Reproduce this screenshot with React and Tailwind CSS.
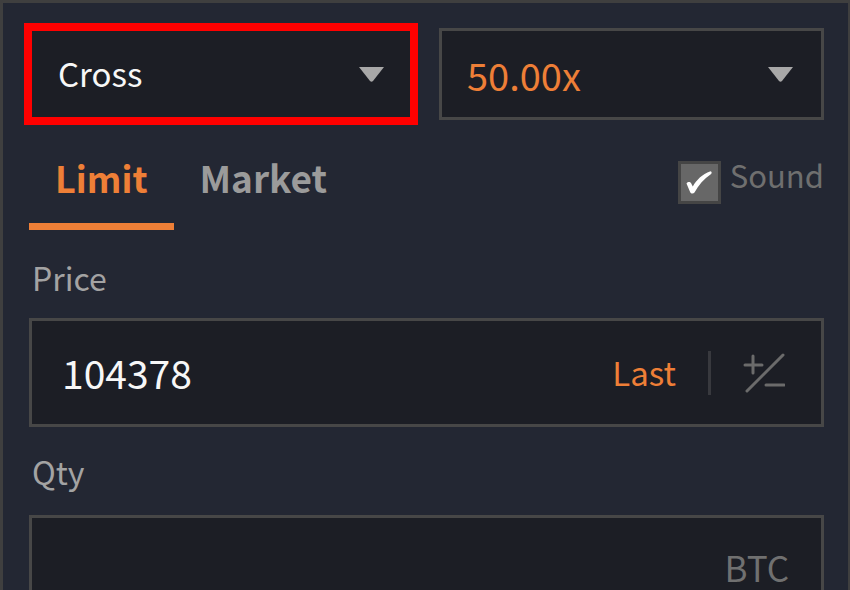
import React, { useState } from 'react';

const FONT = { fontFamily: '"Noto Sans CJK KR", "Noto Sans", sans-serif' };

function Caret() {
  return (
    <svg width="25" height="15" viewBox="0 0 25 15">
      <path d="M0 0 H25 L14 14 Q12.5 15.5 11 14 Z" fill="#a8a8a8" />
    </svg>
  );
}

function PlusMinus() {
  return (
    <svg width="42" height="40" viewBox="0 0 42 40" fill="none" stroke="#6b6b6b" strokeWidth="3" strokeLinecap="round">
      <path d="M2 12 H19" />
      <path d="M10 3 V20" />
      <path d="M4 38 L40 2" />
      <path d="M23 32 H41" />
    </svg>
  );
}

export default function App() {
  const [tab, setTab] = useState('limit');
  const [sound, setSound] = useState(true);

  return (
    <div
      style={FONT}
      className="w-[850px] h-[590px] overflow-hidden bg-[#232733] border-t-[3px] border-l-[3px] border-r-[2px] border-[#3f3f3f]"
    >
      {/* Margin mode / leverage */}
      <div className="flex items-center gap-[26px] pl-[26px] pr-[24px] pt-[25px]">
        <button className="w-[384px] h-[92px] flex items-center justify-between px-[26px] bg-[#1c1e25] border-[3px] border-[#474747] outline-8 outline-[#ff0000] outline-offset-[-3px]">
          <span className="text-[33px] text-[#f7f7f7]">Cross</span>
          <Caret />
        </button>
        <button className="flex-1 h-[92px] flex items-center justify-between pl-[25px] pr-[28px] bg-[#1c1e25] border-[3px] border-[#474747]">
          <span className="text-[38px] text-[#ee7f37]">50.00x</span>
          <Caret />
        </button>
      </div>

      {/* Order type tabs */}
      <div className="flex items-start pl-[26px] pr-[24px]">
        <button onClick={() => setTab('limit')} className="flex flex-col items-stretch pt-[33px]">
          <span className={`px-[26px] text-[36px] leading-[48px] font-bold ${tab === 'limit' ? 'text-[#ee7f37]' : 'text-[#9b9b9b]'}`}>Limit</span>
          <span className={`mt-[22px] h-[7px] ${tab === 'limit' ? 'bg-[#ee7f37]' : 'bg-transparent'}`} />
        </button>
        <button onClick={() => setTab('market')} className="flex flex-col items-stretch pt-[33px]">
          <span className={`px-[26px] text-[37px] leading-[48px] font-bold ${tab === 'market' ? 'text-[#ee7f37]' : 'text-[#9b9b9b]'}`}>Market</span>
          <span className={`mt-[22px] h-[7px] ${tab === 'market' ? 'bg-[#ee7f37]' : 'bg-transparent'}`} />
        </button>
        <label className="ml-auto mt-[41px] flex items-start gap-[9px] cursor-pointer" onClick={() => setSound(!sound)}>
          <span className="w-[43px] h-[43px] flex items-center justify-center bg-[#676767] border-[3px] border-[#454545]">
            {sound && (
              <svg width="26" height="23" viewBox="0 0 26 23">
                <path d="M0.5 12.5 C2 10.5 4.5 10.5 5.5 13 L6.8 15.5 C10.5 9 16 3.5 24.5 0.3 C26 0.8 26 2.3 24.8 3.2 C18 7.8 12.5 14 8.5 21.5 C7.5 23 5 23 4.2 21.3 Z" fill="#ffffff" />
              </svg>
            )}
          </span>
          <span className="text-[31px] leading-[40px] text-[#6f6f6f] -mt-[6px]">Sound</span>
        </label>
      </div>

      <div className="pl-[26px] pr-[24px]">
        {/* Price */}
        <div className="mt-[27px] pl-[3px] text-[32px] leading-[40px] text-[#a3a3a3]">Price</div>
        <div className="mt-[21px] h-[109px] flex items-center pl-[30px] pr-[36px] bg-[#1c1e25] border-[3px] border-[#474747]">
          <span className="text-[39px] text-[#f7f7f7]">104378</span>
          <span className="ml-auto text-[33px] text-[#ee7f37]">Last</span>
          <span className="mx-[32px] w-[3px] h-[44px] bg-[#38393e]" />
          <PlusMinus />
        </div>

        {/* Qty */}
        <div className="mt-[24px] pl-[3px] text-[32px] leading-[40px] text-[#a3a3a3]">Qty</div>
        <div className="mt-[24px] h-[109px] flex items-center justify-end pr-[32px] pb-[6px] bg-[#1c1e25] border-[3px] border-[#474747]">
          <span className="text-[35px] leading-none text-[#707070]">BTC</span>
        </div>
      </div>
    </div>
  );
}
